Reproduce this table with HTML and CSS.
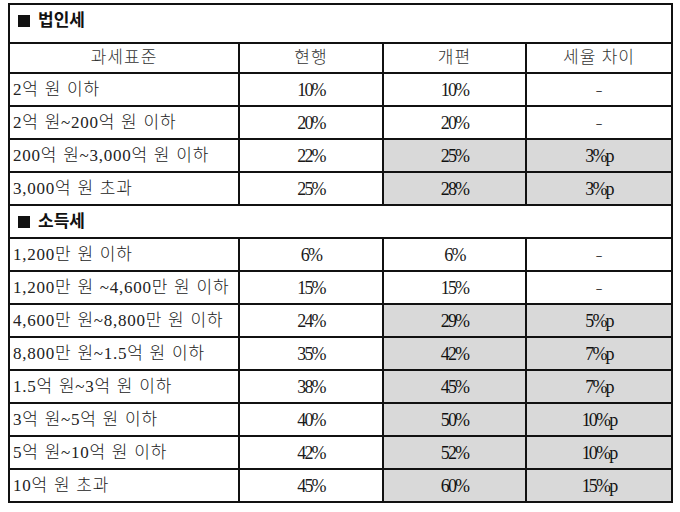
FILE: index.html
```html
<!DOCTYPE html>
<html lang="ko">
<head>
<meta charset="utf-8">
<link rel="stylesheet" href="styles.css">
</head>
<body>
<table class="tax">
  <colgroup>
    <col class="c1"><col class="c2"><col class="c3"><col class="c4">
  </colgroup>
  <tr class="sec first"><td colspan="4"><span class="sq"></span>법인세</td></tr>
  <tr class="head"><td>과세표준</td><td>현행</td><td>개편</td><td>세율 차이</td></tr>
  <tr><td class="lbl">2억 원 이하</td><td class="num">10%</td><td class="num">10%</td><td class="num dash">-</td></tr>
  <tr><td class="lbl">2억 원~200억 원 이하</td><td class="num">20%</td><td class="num">20%</td><td class="num dash">-</td></tr>
  <tr><td class="lbl">200억 원~3,000억 원 이하</td><td class="num">22%</td><td class="num sh">25%</td><td class="num sh">3%p</td></tr>
  <tr><td class="lbl">3,000억 원 초과</td><td class="num">25%</td><td class="num sh">28%</td><td class="num sh">3%p</td></tr>
  <tr class="sec"><td colspan="4"><span class="sq"></span>소득세</td></tr>
  <tr><td class="lbl">1,200만 원 이하</td><td class="num">6%</td><td class="num">6%</td><td class="num dash">-</td></tr>
  <tr><td class="lbl">1,200만 원 ~4,600만 원 이하</td><td class="num">15%</td><td class="num">15%</td><td class="num dash">-</td></tr>
  <tr><td class="lbl">4,600만 원~8,800만 원 이하</td><td class="num">24%</td><td class="num sh">29%</td><td class="num sh">5%p</td></tr>
  <tr><td class="lbl">8,800만 원~1.5억 원 이하</td><td class="num">35%</td><td class="num sh">42%</td><td class="num sh">7%p</td></tr>
  <tr><td class="lbl">1.5억 원~3억 원 이하</td><td class="num">38%</td><td class="num sh">45%</td><td class="num sh">7%p</td></tr>
  <tr><td class="lbl">3억 원~5억 원 이하</td><td class="num">40%</td><td class="num sh">50%</td><td class="num sh">10%p</td></tr>
  <tr><td class="lbl">5억 원~10억 원 이하</td><td class="num">42%</td><td class="num sh">52%</td><td class="num sh">10%p</td></tr>
  <tr><td class="lbl">10억 원 초과</td><td class="num">45%</td><td class="num sh">60%</td><td class="num sh">15%p</td></tr>
</table>
</body>
</html>
```

FILE: styles.css
```css
html, body {
  margin: 0;
  padding: 0;
  background: #ffffff;
}
body {
  padding: 3px 0 0 8px;
  font-family: "Liberation Serif", "Noto Sans CJK KR", serif;
  color: #1a1a1a;
}
.tax {
  border-collapse: collapse;
  table-layout: fixed;
  width: 663px;
  border: 2px solid #111;
}
.c1 { width: 230px; }
.c2 { width: 144px; }
.c3 { width: 143px; }
.c4 { width: 146px; }
.tax td {
  border: 2px solid #111;
  height: 31px;
  padding: 0;
  font-size: 16px;
  line-height: 18px;
  vertical-align: middle;
  white-space: nowrap;
  overflow: hidden;
}
.tax tr.first td {
  height: 30px;
  vertical-align: top;
  padding-top: 7px;
}
.tax tr.head td {
  height: 28px;
  text-align: center;
  color: #333;
  font-weight: 300;
  font-size: 17px;
  letter-spacing: 1px;
}
.sec td {
  font-family: "Liberation Serif", "Noto Sans CJK KR", serif;
  font-weight: 700;
  font-size: 17px;
  padding-left: 8px;
  color: #111;
}
.sq {
  display: inline-block;
  width: 12px;
  height: 12px;
  background: #111;
  margin-right: 8px;
  vertical-align: -1px;
}
.lbl {
  padding-left: 3px !important;
  font-size: 17px !important;
  font-weight: 300;
  letter-spacing: 0.75px;
  word-spacing: 1px;
  color: #222;
}
.num {
  text-align: center;
  font-size: 18px !important;
  letter-spacing: -1.8px;
  color: #1a1a1a;
}
.dash {
  font-family: "DejaVu Sans", sans-serif;
  font-size: 21px !important;
  font-weight: 300;
  letter-spacing: 0;
  color: #333;
}
.sh {
  background: #d9d9d9;
  color: #111;
}
```
